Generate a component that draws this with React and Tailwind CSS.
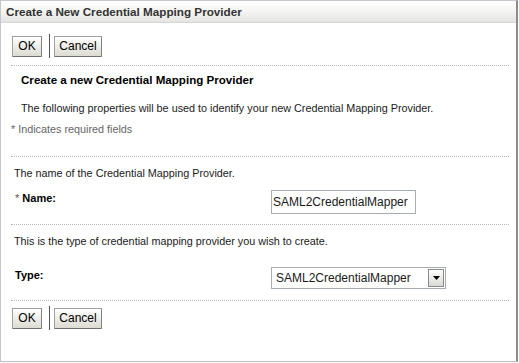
import React from 'react';

const font = { fontFamily: '"Liberation Sans", Arial, sans-serif' };

const Btn = ({ children, w }) => (
  <button
    className={`h-[21px] ${w} text-[12px] text-black bg-gradient-to-b from-white to-[#dcdcd4] border border-[#a0a0a0] border-b-[#707070] border-r-[#808080] rounded-[1px] leading-none`}
  >
    {children}
  </button>
);

const Toolbar = () => (
  <div className="flex items-center pl-[11px] h-[24px]">
    <Btn w="w-[30px]">OK</Btn>
    <div className="w-px h-[24px] bg-[#555] ml-[7px] mr-[4px]"></div>
    <Btn w="w-[48px]">Cancel</Btn>
  </div>
);

const Dotted = () => <div className="mx-[10px] w-[498px] border-t border-dotted border-[#b8b8b8]"></div>;

export default function App() {
  return (
    <div className="w-[519px] h-[363px] bg-white text-[#1a1a1a]" style={font}>
      <div className="w-[518px] h-[362px] border border-[#c2c8ce] border-r-2 border-r-[#8c8c8c] border-b-[#b8bec4] flex flex-col">
        {/* Header */}
        <div className="h-[22px] bg-gradient-to-b from-white via-[#f4f4f2] to-[#e4e4e2] border-b border-[#d6d6d4] flex items-center pl-[5px]">
          <span className="text-[11.7px] font-bold text-[#333]">Create a New Credential Mapping Provider</span>
        </div>

        <div className="mt-[11px]"><Toolbar /></div>
        <div className="mt-[7px]"><Dotted /></div>

        <div className="pl-[20px] mt-[6px] text-[11.6px] font-bold text-black h-[16px] leading-[16px]">Create a new Credential Mapping Provider</div>
        <div className="pl-[20px] mt-[12px] text-[10.8px] h-[16px] leading-[16px]">The following properties will be used to identify your new Credential Mapping Provider.</div>
        <div className="pl-[10px] mt-[5px] text-[10.8px] h-[16px] leading-[16px] text-[#666]">* Indicates required fields</div>

        <div className="mt-[19px]"><Dotted /></div>

        <div className="pl-[13px] mt-[8px] text-[10.8px] h-[16px] leading-[16px]">The name of the Credential Mapping Provider.</div>
        <div className="flex mt-[9px] h-[24px]">
          <div className="w-[270px] pl-[14px] text-[11px] leading-[16px]">
            <span className="text-[#555]">* </span>
            <span className="font-bold text-black">Name:</span>
          </div>
          <div className="w-[145px] h-[24px] border border-[#a5acb2] overflow-hidden flex items-center">
            <span className="text-[12px] whitespace-nowrap pl-[1px]">SAML2CredentialMapper</span>
          </div>
        </div>

        <div className="mt-[10px]"><Dotted /></div>

        <div className="pl-[13px] mt-[8px] text-[10.8px] h-[16px] leading-[16px]">This is the type of credential mapping provider you wish to create.</div>
        <div className="flex mt-[18px] h-[22px]">
          <div className="w-[270px] pl-[14px] text-[11px] leading-[16px] font-bold text-black">Type:</div>
          <div className="w-[175px] h-[22px] border border-[#a5acb2] flex items-center">
            <span className="text-[12px] pl-[4px] flex-1 whitespace-nowrap">SAML2CredentialMapper</span>
            <div className="w-[16px] h-[18px] mr-[1px] border border-[#8a8a8a] bg-gradient-to-b from-white to-[#d8d8d4] flex items-center justify-center">
              <svg width="7" height="4" viewBox="0 0 7 4"><path d="M0 0h7L3.5 4z" fill="#000" /></svg>
            </div>
          </div>
        </div>

        <div className="mt-[11px]"><Dotted /></div>
        <div className="mt-[5px]"><Toolbar /></div>
      </div>
    </div>
  );
}
